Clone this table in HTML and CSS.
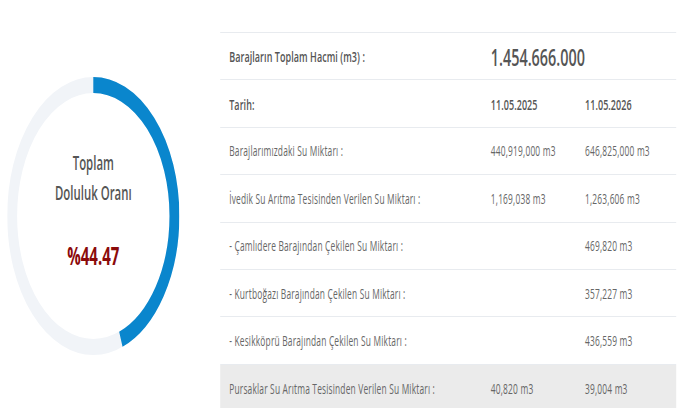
FILE: index.html
```html
<!DOCTYPE html>
<html lang="tr">
<head>
<meta charset="utf-8">
<link rel="stylesheet" href="styles.css">
</head>
<body>
<div class="stage">
  <div class="gauge-col">
    <div class="gauge">
      <svg class="ring" width="287" height="278" viewBox="0 0 278 278" preserveAspectRatio="none">
        <circle cx="139" cy="139" r="131" fill="none" stroke="#f1f4f8" stroke-width="16"/>
        <circle cx="139" cy="139" r="131" fill="none" stroke="#0a86cd" stroke-width="16"
          stroke-dasharray="366.0 1000" transform="rotate(-90 139 139)"/>
      </svg>
      <div class="gauge-text">
        <div class="g-title">Toplam</div>
        <div class="g-title">Doluluk Oranı</div>
        <div class="g-value">%44.47</div>
      </div>
    </div>
  </div>
  <div class="table">
    <div class="row">
      <div class="cell label strong">Barajların Toplam Hacmi (m3) :</div>
      <div class="cell big span2">1.454.666.000</div>
    </div>
    <div class="row">
      <div class="cell label strong">Tarih:</div>
      <div class="cell strong">11.05.2025</div>
      <div class="cell strong">11.05.2026</div>
    </div>
    <div class="row">
      <div class="cell label">Barajlarımızdaki Su Miktarı :</div>
      <div class="cell">440,919,000 m3</div>
      <div class="cell">646,825,000 m3</div>
    </div>
    <div class="row">
      <div class="cell label">İvedik Su Arıtma Tesisinden Verilen Su Miktarı :</div>
      <div class="cell">1,169,038 m3</div>
      <div class="cell">1,263,606 m3</div>
    </div>
    <div class="row">
      <div class="cell label">- Çamlıdere Barajından Çekilen Su Miktarı :</div>
      <div class="cell"></div>
      <div class="cell">469,820 m3</div>
    </div>
    <div class="row">
      <div class="cell label">- Kurtboğazı Barajından Çekilen Su Miktarı :</div>
      <div class="cell"></div>
      <div class="cell">357,227 m3</div>
    </div>
    <div class="row">
      <div class="cell label">- Kesikköprü Barajından Çekilen Su Miktarı :</div>
      <div class="cell"></div>
      <div class="cell">436,559 m3</div>
    </div>
    <div class="row shaded">
      <div class="cell label">Pursaklar Su Arıtma Tesisinden Verilen Su Miktarı :</div>
      <div class="cell">40,820 m3</div>
      <div class="cell">39,004 m3</div>
    </div>
  </div>
</div>
</body>
</html>
```
FILE: styles.css
```css
html, body {
  margin: 0;
  padding: 0;
  background: #ffffff;
  overflow: hidden;
}
body {
  font-family: "Open Sans", "Liberation Sans", sans-serif;
  color: #666;
}
.stage {
  width: 1138px;
  height: 408px;
  display: flex;
  transform: scaleX(0.6);
  transform-origin: 0 0;
}
.gauge-col {
  width: 367px;
  flex: none;
}
.gauge {
  margin: 77px 0 0 12px;
  width: 287px;
  height: 278px;
  display: grid;
}
.ring, .gauge-text {
  grid-area: 1 / 1;
}
.gauge-text {
  display: flex;
  flex-direction: column;
  align-items: center;
  padding-top: 71px;
}
.g-title {
  font-size: 19px;
  font-weight: 600;
  line-height: 30px;
  color: #555;
}
.g-value {
  margin-top: 32px;
  font-size: 25px;
  font-weight: 700;
  line-height: 30px;
  color: #8b0a0a;
}
.table {
  width: 760px;
  flex: none;
  margin-top: 32px;
  border-top: 1px solid #e8ebef;
}
.row {
  display: grid;
  grid-template-columns: 451px 157px 1fr;
  align-items: center;
  height: 47.4px;
  box-sizing: border-box;
  border-bottom: 1px solid #e8ebef;
}
.row.shaded {
  background: #ebebeb;
  border-bottom: none;
}
.cell {
  font-size: 14px;
  letter-spacing: 0.3px;
  color: #666;
  white-space: nowrap;
}
.label {
  padding-left: 15px;
}
.strong {
  font-size: 15px;
  letter-spacing: 0.1px;
  font-weight: 600;
  color: #555;
}
.big {
  font-size: 24px;
  letter-spacing: 0;
  font-weight: 600;
  color: #555;
}
.span2 {
  grid-column: 2 / 4;
}
```
